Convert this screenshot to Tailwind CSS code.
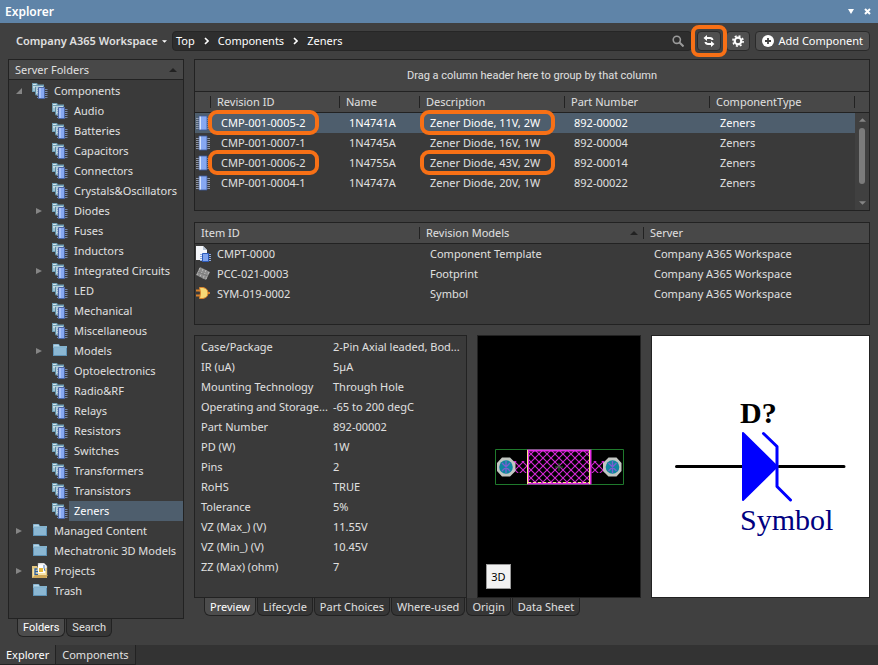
<!DOCTYPE html>
<html lang="en">
<head>
    <meta charset="UTF-8">
    <meta name="viewport" content="width=device-width, initial-scale=1.0">
    <title>Explorer</title>
    <script src="https://cdn.jsdelivr.net/npm/@tailwindcss/browser@4"></script>
</head>
<body class="bg-[#404040] font-['Noto_Sans','Open_Sans',sans-serif] text-[11px] leading-5 text-[#e0e0e0]">

    <!-- Shared icons -->
    <svg class="hidden">
        <symbol id="i-comp" viewBox="0 0 16 16">
            <path d="M0 0h5l1 1.500h6V9H0z" fill="#6f9db4"/>
            <path d="M1 1h3.500v1H1z" fill="#d5e8ee"/>
            <path d="M1 3h10v2H1z" fill="#c3dbe4"/>
            <path d="M1 5h3v3H1z" fill="#9fc3d3"/>
            <path d="M3 3.500h4l1 1h5V12H3z" fill="#a8c7d4"/>
            <path d="M4 5.500h8V11H4z" fill="#b9d2dc"/>
            <path d="M3.500 4v8H6" stroke="#5c8ba3" fill="none"/>
            <path d="M5 6.500h10.500M5 8.500h10.500M5 10.500h10.500M5 12.500h10.500M5 14.500h10.500" stroke="#8199c8" stroke-width=".8"/>
            <path d="M6.500 4.500h6v11h-6z" fill="#86a8f2" stroke="#4a66a6"/>
            <path d="M7 5h2v10H7z" fill="#a9c1f8"/>
        </symbol>
        <symbol id="i-folder" viewBox="0 0 16 16">
            <path d="M1 1h6l1 2h7v10H1z" fill="#5f94b8"/>
            <path d="M1.500 1.500h5l1 2h-6z" fill="#b9d7e8"/>
            <path d="M2 5h12v7H2z" fill="#8bb7d3"/>
            <path d="M1 4h14" stroke="#a9d2e4"/>
        </symbol>
        <symbol id="i-project" viewBox="0 0 16 16">
            <path d="M6 0h6l3 3v9H6z" fill="#f2f2f2" stroke="#999" stroke-width=".5"/>
            <path d="M0 3h5l1 2h9v10H0z" fill="#e3c67e"/>
            <path d="M1 6l3-1h10v9H1z" fill="#f6e3a9"/>
            <path d="M6 2h7v8H6z" fill="#fff"/>
            <path d="M7 5h4v4H7z" fill="#e5b93c"/>
            <path d="M5.500 6H3v5.500h3M3 8.500h3" stroke="#2d5e9c" fill="none" stroke-width="1.300"/>
            <path d="M12 2v3l1 3" stroke="#4b79b5" fill="none"/>
            <path d="M0 15l3-3h13l-2 3z" fill="#cfa95a"/>
        </symbol>
        <symbol id="i-chip" viewBox="0 0 16 16">
            <path d="M1 3.500h14M1 5.500h14M1 7.500h14M1 9.500h14M1 11.500h14M1 13.500h14" stroke="#a3abbc" stroke-width=".8"/>
            <path d="M4 1h8v14H4z" fill="#86a8f2"/>
            <path d="M4 1h2v14H4z" fill="#d8e5fb"/>
            <path d="M4 1h8v14H4z" fill="none" stroke="#3c5a9c" stroke-width=".8"/>
        </symbol>
        <symbol id="i-right" viewBox="0 0 8 8"><path d="M0 1l6 3-6 3z" fill="#858585"/></symbol>
        <symbol id="i-open" viewBox="0 0 8 8"><path d="M6 1v6H0z" fill="#858585"/></symbol>
        <symbol id="i-up" viewBox="0 0 8 4"><path d="M4 0l4 4H0z" fill="currentColor"/></symbol>
        <symbol id="i-down" viewBox="0 0 8 4"><path d="M0 0h8L4 4z" fill="currentColor"/></symbol>
        <symbol id="i-chevron" viewBox="0 0 5 8"><path d="M1 1l3 3-3 3" fill="none" stroke="#fff" stroke-width="1.600"/></symbol>
    </svg>

    <div class="flex min-h-screen flex-col">
        <header class="flex h-[23px] items-center bg-[#5f84a8] pr-[3px] pl-[5px] text-white">
            <h1 class="flex-1 text-xs font-semibold">Explorer</h1>
            <button class="flex w-4 justify-center" aria-label="Panel menu"><svg class="h-[5px] w-[6px]" viewBox="0 0 6 5"><path d="M0 0h6L3 5z" fill="#fff"/></svg></button>
            <button class="flex w-4 justify-center" aria-label="Close">
                <svg class="size-[7px]" viewBox="0 0 7 7"><path d="M1 1l5 5M6 1L1 6" stroke="#fff" stroke-width="2"/></svg>
            </button>
        </header>

        <div class="flex items-center py-2 pr-2 pl-4">
            <button class="flex w-[156px] items-center gap-1 font-semibold whitespace-nowrap">Company A365 Workspace
                <svg class="h-[3px] w-[5px]" viewBox="0 0 8 4"><path d="M0 0h8L4 4z" fill="#fff"/></svg>
            </button>
            <nav class="flex h-5 flex-1 items-center gap-[9px] rounded-sm border border-[#262626] bg-[#2e2e2e] px-[3px] text-white" aria-label="Breadcrumb">
                <a href="#">Top</a>
                <svg class="h-2 w-[5px]"><use href="#i-chevron"/></svg>
                <a href="#">Components</a>
                <svg class="h-2 w-[5px]"><use href="#i-chevron"/></svg>
                <a href="#">Zeners</a>
                <button class="ml-auto px-1" aria-label="Search">
                    <svg class="size-3" viewBox="0 0 12 12" fill="none" stroke="#9a9a9a"><circle cx="4.800" cy="4.800" r="3.600" stroke-width="1.600"/><path d="M7.500 7.500l4 4" stroke-width="2"/></svg>
                </button>
            </nav>
            <div class="relative ml-[5px]">
                <button class="flex h-5 w-6 items-center justify-center rounded-sm border border-[#2a2a2a] bg-[#505050]" aria-label="Refresh">
                    <svg class="size-3" viewBox="0 0 12 12" fill="#fff"><path d="M4 0v2h3q3 0 3.500 3h-2Q8 4 7 4H4v2L0.500 3zM8 12v-2H5q-3 0-3.500-3h2Q4 8 5 8h3V6l3.500 3z"/></svg>
                </button>
                <span class="pointer-events-none absolute -inset-[6px] rounded-lg border-4 border-[#f77016]"></span>
            </div>
            <button class="ml-[5px] flex h-5 w-6 items-center justify-center rounded-sm border border-[#2a2a2a] bg-[#505050]" aria-label="Settings">
                <svg class="size-3" viewBox="0 0 12 12" fill="none" stroke="#fff"><circle cx="6" cy="6" r="3.300" stroke-width="2.200"/><circle cx="6" cy="6" r="5.100" stroke-width="1.600" stroke-dasharray="2 2.005"/></svg>
            </button>
            <button class="ml-[5px] flex h-5 items-center gap-1 rounded-sm border border-[#2a2a2a] bg-[#505050] px-[6px] whitespace-nowrap text-white">
                <svg class="size-3" viewBox="0 0 12 12"><circle cx="6" cy="6" r="6" fill="#fff"/><path d="M6 3v6M3 6h6" stroke="#444" stroke-width="1.800"/></svg>
                Add Component
            </button>
        </div>

        <main class="flex flex-1 gap-[10px] pr-2 pl-2">
            <aside class="flex w-44 shrink-0 flex-col">
                <div class="flex-1 border border-[#222] bg-[#3a3a3a]">
                    <h2 class="mb-px flex h-5 items-center justify-between border-b border-[#222] bg-[#484848] px-[6px]">Server Folders
                        <svg class="h-1 w-2 text-[#222]"><use href="#i-up"/></svg>
                    </h2>
                    <ul class="whitespace-nowrap">
                        <li>
                            <a href="#" class="flex items-center pl-[7px]"><svg class="mr-2 size-2"><use href="#i-open"/></svg><svg class="size-4"><use href="#i-comp"/></svg><span class="ml-px flex-1 pl-[5px]">Components</span></a>
                            <ul class="pl-5">
                                <li><a href="#" class="flex items-center pl-[23px]"><svg class="size-4"><use href="#i-comp"/></svg><span class="ml-px flex-1 pl-[5px]">Audio</span></a></li>
                                <li><a href="#" class="flex items-center pl-[23px]"><svg class="size-4"><use href="#i-comp"/></svg><span class="ml-px flex-1 pl-[5px]">Batteries</span></a></li>
                                <li><a href="#" class="flex items-center pl-[23px]"><svg class="size-4"><use href="#i-comp"/></svg><span class="ml-px flex-1 pl-[5px]">Capacitors</span></a></li>
                                <li><a href="#" class="flex items-center pl-[23px]"><svg class="size-4"><use href="#i-comp"/></svg><span class="ml-px flex-1 pl-[5px]">Connectors</span></a></li>
                                <li><a href="#" class="flex items-center pl-[23px]"><svg class="size-4"><use href="#i-comp"/></svg><span class="ml-px flex-1 pl-[5px]">Crystals&amp;Oscillators</span></a></li>
                                <li><a href="#" class="flex items-center pl-[7px]"><svg class="mr-2 size-2"><use href="#i-right"/></svg><svg class="size-4"><use href="#i-comp"/></svg><span class="ml-px flex-1 pl-[5px]">Diodes</span></a></li>
                                <li><a href="#" class="flex items-center pl-[23px]"><svg class="size-4"><use href="#i-comp"/></svg><span class="ml-px flex-1 pl-[5px]">Fuses</span></a></li>
                                <li><a href="#" class="flex items-center pl-[23px]"><svg class="size-4"><use href="#i-comp"/></svg><span class="ml-px flex-1 pl-[5px]">Inductors</span></a></li>
                                <li><a href="#" class="flex items-center pl-[7px]"><svg class="mr-2 size-2"><use href="#i-right"/></svg><svg class="size-4"><use href="#i-comp"/></svg><span class="ml-px flex-1 pl-[5px]">Integrated Circuits</span></a></li>
                                <li><a href="#" class="flex items-center pl-[23px]"><svg class="size-4"><use href="#i-comp"/></svg><span class="ml-px flex-1 pl-[5px]">LED</span></a></li>
                                <li><a href="#" class="flex items-center pl-[23px]"><svg class="size-4"><use href="#i-comp"/></svg><span class="ml-px flex-1 pl-[5px]">Mechanical</span></a></li>
                                <li><a href="#" class="flex items-center pl-[23px]"><svg class="size-4"><use href="#i-comp"/></svg><span class="ml-px flex-1 pl-[5px]">Miscellaneous</span></a></li>
                                <li><a href="#" class="flex items-center pl-[7px]"><svg class="mr-2 size-2"><use href="#i-right"/></svg><svg class="size-4"><use href="#i-folder"/></svg><span class="ml-px flex-1 pl-[5px]">Models</span></a></li>
                                <li><a href="#" class="flex items-center pl-[23px]"><svg class="size-4"><use href="#i-comp"/></svg><span class="ml-px flex-1 pl-[5px]">Optoelectronics</span></a></li>
                                <li><a href="#" class="flex items-center pl-[23px]"><svg class="size-4"><use href="#i-comp"/></svg><span class="ml-px flex-1 pl-[5px]">Radio&amp;RF</span></a></li>
                                <li><a href="#" class="flex items-center pl-[23px]"><svg class="size-4"><use href="#i-comp"/></svg><span class="ml-px flex-1 pl-[5px]">Relays</span></a></li>
                                <li><a href="#" class="flex items-center pl-[23px]"><svg class="size-4"><use href="#i-comp"/></svg><span class="ml-px flex-1 pl-[5px]">Resistors</span></a></li>
                                <li><a href="#" class="flex items-center pl-[23px]"><svg class="size-4"><use href="#i-comp"/></svg><span class="ml-px flex-1 pl-[5px]">Switches</span></a></li>
                                <li><a href="#" class="flex items-center pl-[23px]"><svg class="size-4"><use href="#i-comp"/></svg><span class="ml-px flex-1 pl-[5px]">Transformers</span></a></li>
                                <li><a href="#" class="flex items-center pl-[23px]"><svg class="size-4"><use href="#i-comp"/></svg><span class="ml-px flex-1 pl-[5px]">Transistors</span></a></li>
                                <li><a href="#" class="flex items-center pl-[23px]"><svg class="size-4"><use href="#i-comp"/></svg><span class="ml-px flex-1 bg-[#4e5e6d] pl-[5px] text-white">Zeners</span></a></li>
                            </ul>
                        </li>
                        <li><a href="#" class="flex items-center pl-[7px]"><svg class="mr-2 size-2"><use href="#i-right"/></svg><svg class="size-4"><use href="#i-folder"/></svg><span class="ml-px flex-1 pl-[5px]">Managed Content</span></a></li>
                        <li><a href="#" class="flex items-center pl-[23px]"><svg class="size-4"><use href="#i-folder"/></svg><span class="ml-px flex-1 pl-[5px]">Mechatronic 3D Models</span></a></li>
                        <li><a href="#" class="flex items-center pl-[7px]"><svg class="mr-2 size-2"><use href="#i-right"/></svg><svg class="size-4"><use href="#i-project"/></svg><span class="ml-px flex-1 pl-[5px]">Projects</span></a></li>
                        <li><a href="#" class="flex items-center pl-[23px]"><svg class="size-4"><use href="#i-folder"/></svg><span class="ml-px flex-1 pl-[5px]">Trash</span></a></li>
                    </ul>
                </div>
                <div class="flex h-[18px] gap-px pl-[9px] font-[Roboto,sans-serif] leading-4">
                    <button class="rounded-b-md border border-t-0 border-[#222] bg-[#4c4c4c] px-[5px] text-white">Folders</button>
                    <button class="rounded-b-md border border-t-0 border-[#222] bg-[#363636] px-[5px]">Search</button>
                </div>
            </aside>

            <div class="flex min-w-0 flex-1 flex-col">
                <!-- Component revisions -->
                <section class="relative h-[152px] border border-[#222] bg-[#3a3a3a]">
                    <p class="h-8 border-b border-[#222] bg-[#454545] text-center font-[Roboto,sans-serif] leading-[31px]">Drag a column header here to group by that column</p>
                    <table class="w-full table-fixed text-left">
                        <colgroup>
                            <col class="w-4"><col class="w-[129px]"><col class="w-20"><col class="w-[145px]"><col class="w-[145px]"><col><col class="w-[14px]">
                        </colgroup>
                        <thead class="border-b border-[#222] bg-[#484848]">
                            <tr class="h-5">
                                <th class="p-0"><div class="h-3 border-r border-[#222]"></div></th>
                                <th class="p-0 font-normal"><div class="h-3 border-r border-[#222] pl-[6px] leading-3">Revision ID</div></th>
                                <th class="p-0 font-normal"><div class="h-3 border-r border-[#222] pl-[6px] leading-3">Name</div></th>
                                <th class="p-0 font-normal"><div class="h-3 border-r border-[#222] pl-[6px] leading-3">Description</div></th>
                                <th class="p-0 font-normal"><div class="h-3 border-r border-[#222] pl-[6px] leading-3">Part Number</div></th>
                                <th class="p-0 font-normal"><div class="h-3 border-r border-[#222] pl-[6px] leading-3">ComponentType</div></th>
                                <th class="p-0"></th>
                            </tr>
                        </thead>
                        <tbody>
                            <tr class="text-white">
                                <td class="bg-[#4e5e6d] p-0"><svg class="size-4"><use href="#i-chip"/></svg></td>
                                <td class="relative bg-[#4e5e6d] p-0 pl-[10px]">CMP-001-0005-2<span class="absolute -top-[3px] -left-[3px] h-[25px] w-[111px] rounded-[9px] border-4 border-[#f77016]"></span></td>
                                <td class="bg-[#4e5e6d] p-0 pl-[9px]">1N4741A</td>
                                <td class="relative bg-[#4e5e6d] p-0 pl-[10px]">Zener Diode, 11V, 2W<span class="absolute -top-[3px] left-0 h-[25px] w-[135px] rounded-[9px] border-4 border-[#f77016]"></span></td>
                                <td class="bg-[#4e5e6d] p-0 pl-[9px]">892-00002</td>
                                <td class="bg-[#4e5e6d] p-0 pl-[10px]">Zeners</td>
                                <td class="p-0"></td>
                            </tr>
                            <tr>
                                <td class="p-0"><svg class="size-4"><use href="#i-chip"/></svg></td>
                                <td class="p-0 pl-[10px]">CMP-001-0007-1</td>
                                <td class="p-0 pl-[9px]">1N4745A</td>
                                <td class="p-0 pl-[10px]">Zener Diode, 16V, 1W</td>
                                <td class="p-0 pl-[9px]">892-00004</td>
                                <td class="p-0 pl-[10px]">Zeners</td>
                                <td class="p-0"></td>
                            </tr>
                            <tr>
                                <td class="p-0"><svg class="size-4"><use href="#i-chip"/></svg></td>
                                <td class="relative p-0 pl-[10px]">CMP-001-0006-2<span class="absolute -top-[3px] -left-[3px] h-[25px] w-[111px] rounded-[9px] border-4 border-[#f77016]"></span></td>
                                <td class="p-0 pl-[9px]">1N4755A</td>
                                <td class="relative p-0 pl-[10px]">Zener Diode, 43V, 2W<span class="absolute -top-[3px] left-0 h-[25px] w-[135px] rounded-[9px] border-4 border-[#f77016]"></span></td>
                                <td class="p-0 pl-[9px]">892-00014</td>
                                <td class="p-0 pl-[10px]">Zeners</td>
                                <td class="p-0"></td>
                            </tr>
                            <tr>
                                <td class="p-0"><svg class="size-4"><use href="#i-chip"/></svg></td>
                                <td class="p-0 pl-[10px]">CMP-001-0004-1</td>
                                <td class="p-0 pl-[9px]">1N4747A</td>
                                <td class="p-0 pl-[10px]">Zener Diode, 20V, 1W</td>
                                <td class="p-0 pl-[9px]">892-00022</td>
                                <td class="p-0 pl-[10px]">Zeners</td>
                                <td class="p-0"></td>
                            </tr>
                        </tbody>
                    </table>
                    <div class="absolute top-[53px] right-0 bottom-0 flex w-[14px] flex-col items-center bg-[#404040] py-[5px] text-[#858585]">
                        <svg class="h-1 w-[7px]"><use href="#i-up"/></svg>
                        <div class="mt-[6px] h-14 w-[6px] rounded-full bg-[#7b7b7b]"></div>
                        <svg class="mt-auto h-1 w-[7px]"><use href="#i-down"/></svg>
                    </div>
                </section>

                <!-- Models of the selected revision -->
                <section class="mt-[11px] h-[103px] border border-[#222] bg-[#3a3a3a]">
                    <table class="w-full table-fixed text-left">
                        <colgroup>
                            <col class="w-[225px]"><col class="w-56"><col>
                        </colgroup>
                        <thead class="border-b border-[#222] bg-[#484848]">
                            <tr class="h-5">
                                <th class="p-0 font-normal"><div class="h-3 border-r border-[#222] pl-[6px] leading-3">Item ID</div></th>
                                <th class="p-0 font-normal"><div class="flex h-3 items-center justify-between border-r border-[#222] pr-[5px] pl-[6px] leading-3">Revision Models<svg class="h-1 w-2 text-[#222]"><use href="#i-up"/></svg></div></th>
                                <th class="p-0 font-normal"><div class="pl-[6px] leading-3">Server</div></th>
                            </tr>
                        </thead>
                        <tbody>
                            <tr>
                                <td class="p-0">
                                    <div class="flex items-center gap-[6px]">
                                        <svg class="size-4" viewBox="0 0 16 16"><path d="M1 0h7l4 4v10H1z" fill="#f4f6fa"/><path d="M8 0l4 4H8z" fill="#b8c4d4"/><path d="M5 8.500h11M5 10.500h11M5 12.500h11M5 14.500h11" stroke="#8eaae0"/><path d="M7.500 7.500h6v8h-6z" fill="#7fa3ee" stroke="#2c5ab8"/></svg>
                                        CMPT-0000
                                    </div>
                                </td>
                                <td class="p-0 pl-[10px]">Component Template</td>
                                <td class="p-0 pl-[10px]">Company A365 Workspace</td>
                            </tr>
                            <tr>
                                <td class="p-0">
                                    <div class="flex items-center gap-[6px]">
                                        <svg class="size-4" viewBox="0 0 16 16"><path d="M5 1l10 5-4 8L1 9z" fill="#8b8b8b"/><path d="M5 2l-3 7M8 3l-3 8M11 4l-3 9M14 6l-3 7" stroke="#bcbcbc" stroke-dasharray="2 1"/><path d="M3 6l10 4" stroke="#777"/></svg>
                                        PCC-021-0003
                                    </div>
                                </td>
                                <td class="p-0 pl-[10px]">Footprint</td>
                                <td class="p-0 pl-[10px]">Company A365 Workspace</td>
                            </tr>
                            <tr>
                                <td class="p-0">
                                    <div class="flex items-center gap-[6px]">
                                        <svg class="size-4" viewBox="0 0 16 16"><path d="M1 4.500h5M1 9.500h5M12 7h3" stroke="#d9822b" stroke-width="2"/><path d="M4.500 1.500H8q5 1 5 5.500t-5 5.500H4.500q2-5.500 0-11z" fill="#f6d976" stroke="#d9822b"/></svg>
                                        SYM-019-0002
                                    </div>
                                </td>
                                <td class="p-0 pl-[10px]">Symbol</td>
                                <td class="p-0 pl-[10px]">Company A365 Workspace</td>
                            </tr>
                        </tbody>
                    </table>
                </section>

                <!-- Preview of the selected revision -->
                <div class="mt-[10px] flex h-[263px] gap-[10px]">
                    <section class="w-[273px] border border-[#222] bg-[#3a3a3a] pt-px">
                        <table class="w-full table-fixed text-left whitespace-nowrap">
                            <colgroup><col class="w-[138px]"><col></colgroup>
                            <tbody>
                                <tr><th class="p-0 pl-[6px] font-normal">Case/Package</th><td class="p-0">2-Pin Axial leaded, Bod...</td></tr>
                                <tr><th class="p-0 pl-[6px] font-normal">IR (uA)</th><td class="p-0">5µA</td></tr>
                                <tr><th class="p-0 pl-[6px] font-normal">Mounting Technology</th><td class="p-0">Through Hole</td></tr>
                                <tr><th class="p-0 pl-[6px] font-normal">Operating and Storage...</th><td class="p-0">-65 to 200 degC</td></tr>
                                <tr><th class="p-0 pl-[6px] font-normal">Part Number</th><td class="p-0">892-00002</td></tr>
                                <tr><th class="p-0 pl-[6px] font-normal">PD (W)</th><td class="p-0">1W</td></tr>
                                <tr><th class="p-0 pl-[6px] font-normal">Pins</th><td class="p-0">2</td></tr>
                                <tr><th class="p-0 pl-[6px] font-normal">RoHS</th><td class="p-0">TRUE</td></tr>
                                <tr><th class="p-0 pl-[6px] font-normal">Tolerance</th><td class="p-0">5%</td></tr>
                                <tr><th class="p-0 pl-[6px] font-normal">VZ (Max_) (V)</th><td class="p-0">11.55V</td></tr>
                                <tr><th class="p-0 pl-[6px] font-normal">VZ (Min_) (V)</th><td class="p-0">10.45V</td></tr>
                                <tr><th class="p-0 pl-[6px] font-normal">ZZ (Max) (ohm)</th><td class="p-0">7</td></tr>
                            </tbody>
                        </table>
                    </section>

                    <section class="relative flex w-[164px] items-center justify-center border border-[#222] bg-black">
                        <svg class="h-[37px] w-[130px]" viewBox="494 448 130 37" fill="none" role="img" aria-label="Footprint">
                            <defs>
                                <pattern id="hatch" width="8" height="8" x="527" y="450" patternUnits="userSpaceOnUse">
                                    <path d="M0 0l8 8M8 0L0 8" stroke="#d428d4" stroke-width="1.100"/>
                                </pattern>
                            </defs>
                            <path d="M495.500 449.500h128v35h-128z" stroke="#1f7a2c"/>
                            <path d="M511 461h16v12h-16zM591 461h14v12h-14z" fill="url(#hatch)"/>
                            <path d="M502 457.500h8l5.500 5.500v8l-5.500 5.500h-8l-5-5.500v-8zM608.500 457.500h8l5 5.500v8l-5 5.500h-8l-5.500-5.500v-8z" fill="#c2c6c2"/>
                            <circle cx="506" cy="467" r="6.800" fill="#0f86a0"/>
                            <circle cx="612.500" cy="467" r="6.800" fill="#0f86a0"/>
                            <path d="M502 463l8 8M510 463l-8 8M506 461v12M608.500 463l8 8M616.500 463l-8 8M612.500 461v12" stroke="#7a5fd0" stroke-width="1.300"/>
                            <path d="M528 450.500h62.500v33H528z" fill="url(#hatch)" stroke="#e32be3" stroke-width="2"/>
                            <path d="M527.500 450v34M589.500 450v34" stroke="#f6e58c"/>
                            <path d="M528 482.500h62" stroke="#f6e58c" stroke-dasharray="3 2"/>
                            <path d="M555 467h8M559 463v8" stroke="#2c6b2c"/>
                        </svg>
                        <button class="absolute bottom-2 left-2 size-[25px] border border-[#9a9a9a] bg-[#f2f2f2] text-black">3D</button>
                    </section>

                    <section class="flex flex-1 items-center justify-center border border-[#222] bg-white">
                        <svg class="h-[143px] w-44" viewBox="673 395 176 143" fill="none" stroke-linecap="round" stroke-linejoin="round" role="img" aria-label="Symbol">
                            <path d="M676.500 466.500h66M779 466.500h65" stroke="#000" stroke-width="3"/>
                            <path d="M743 433v67l34-33.500z" fill="#00f" stroke="#00f" stroke-width="2"/>
                            <path d="M763.500 433.500l13.500 13v40l13.500 13.500" stroke="#00f" stroke-width="3"/>
                            <text x="740" y="423" fill="#000" class="font-['Liberation_Serif',serif] text-[30px] font-bold">D?</text>
                            <text x="740" y="530" fill="#000080" class="font-['Liberation_Serif',serif] text-[30px]">Symbol</text>
                        </svg>
                    </section>
                </div>
                <div class="flex h-[18px] gap-px pl-[10px] leading-4">
                    <button class="rounded-b-md border border-t-0 border-[#222] bg-[#4c4c4c] px-[5px] text-white">Preview</button>
                    <button class="rounded-b-md border border-t-0 border-[#222] bg-[#363636] px-[5px]">Lifecycle</button>
                    <button class="rounded-b-md border border-t-0 border-[#222] bg-[#363636] px-[5px]">Part Choices</button>
                    <button class="rounded-b-md border border-t-0 border-[#222] bg-[#363636] px-[5px]">Where-used</button>
                    <button class="rounded-b-md border border-t-0 border-[#222] bg-[#363636] px-[5px]">Origin</button>
                    <button class="rounded-b-md border border-t-0 border-[#222] bg-[#363636] px-[5px]">Data Sheet</button>
                </div>
            </div>
        </main>

        <footer class="mt-2 flex h-5 bg-[#333] leading-[18px]">
            <button class="border-r border-b border-[#222] bg-[#404040] px-[6px] text-white">Explorer</button>
            <button class="border-r border-b border-[#222] bg-[#383838] px-[6px]">Components</button>
        </footer>
    </div>
</body>
</html>
